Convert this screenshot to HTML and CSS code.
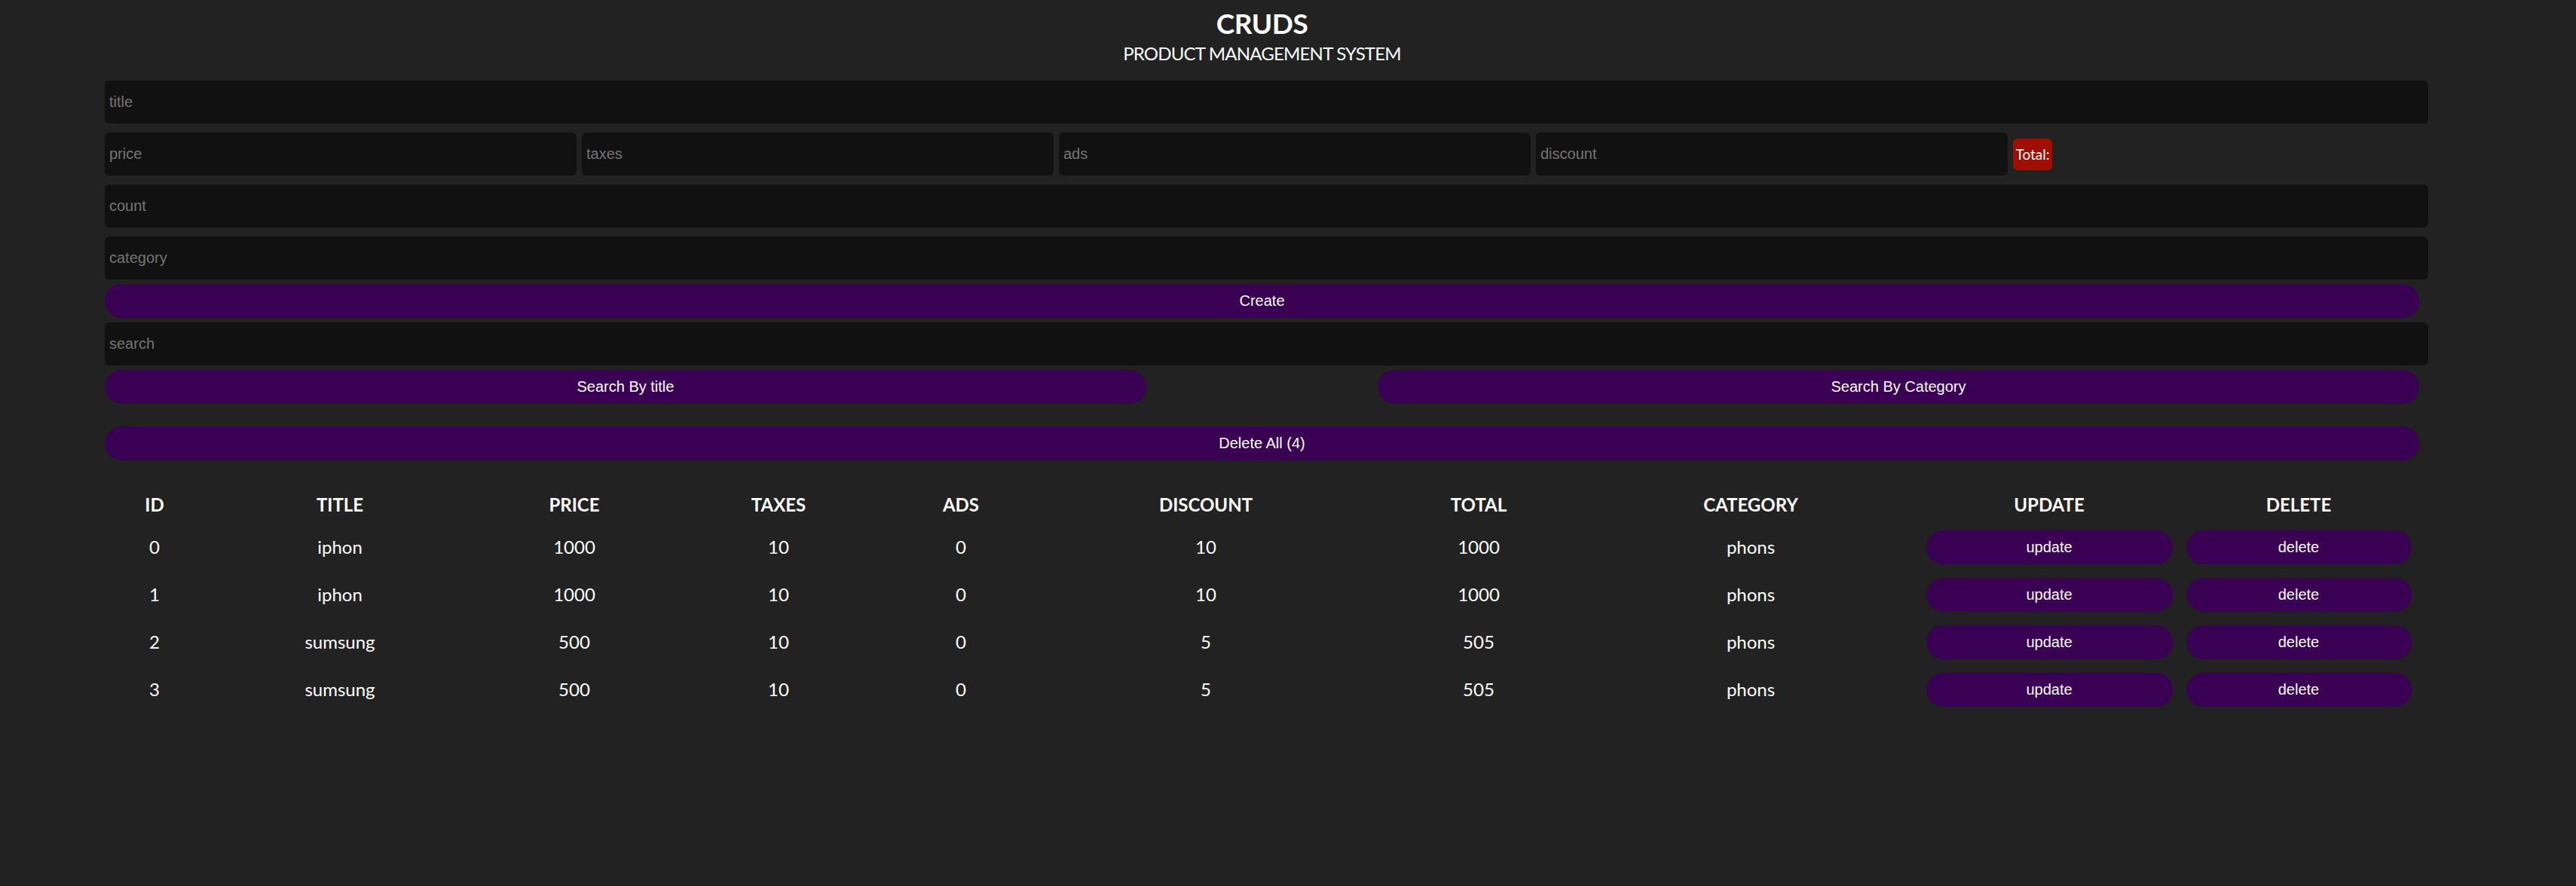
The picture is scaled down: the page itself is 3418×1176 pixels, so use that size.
FILE: index.html
```html
<!DOCTYPE html>
<html lang="en">
<head>
<meta charset="utf-8">
<title>CRUDS</title>
<link rel="stylesheet" href="styles.css">
</head>
<body>
<div class="crud">
  <div class="head">
    <h2>CRUDS</h2>
    <p>product management system</p>
  </div>
  <div class="inputs">
    <input type="text" placeholder="title" class="field">
    <div class="price">
      <input type="number" placeholder="price" class="field small">
      <input type="number" placeholder="taxes" class="field small">
      <input type="number" placeholder="ads" class="field small">
      <input type="number" placeholder="discount" class="field small">
      <small class="total">Total:</small>
    </div>
    <input type="number" placeholder="count" class="field">
    <input type="text" placeholder="category" class="field">
    <button class="btn">Create</button>
  </div>
  <div class="outputs">
    <input type="text" placeholder="search" class="field">
    <div class="btn-search">
      <button class="btn half">Search By title</button>
      <button class="btn half">Search By Category</button>
    </div>
    <div class="delete-all">
      <button class="btn">Delete All (4)</button>
    </div>
    <table class="products">
      <colgroup>
        <col class="c-id"><col class="c-title"><col class="c-price"><col class="c-taxes"><col class="c-ads">
        <col class="c-discount"><col class="c-total"><col class="c-category"><col class="c-update"><col class="c-delete">
      </colgroup>
      <thead>
        <tr>
          <th>id</th><th>title</th><th>price</th><th>taxes</th><th>ads</th>
          <th>discount</th><th>total</th><th>category</th><th>update</th><th>delete</th>
        </tr>
      </thead>
      <tbody>
        <tr>
          <td>0</td><td>iphon</td><td>1000</td><td>10</td><td>0</td><td>10</td><td>1000</td><td>phons</td>
          <td><button class="btn">update</button></td><td><button class="btn">delete</button></td>
        </tr>
        <tr>
          <td>1</td><td>iphon</td><td>1000</td><td>10</td><td>0</td><td>10</td><td>1000</td><td>phons</td>
          <td><button class="btn">update</button></td><td><button class="btn">delete</button></td>
        </tr>
        <tr>
          <td>2</td><td>sumsung</td><td>500</td><td>10</td><td>0</td><td>5</td><td>505</td><td>phons</td>
          <td><button class="btn">update</button></td><td><button class="btn">delete</button></td>
        </tr>
        <tr>
          <td>3</td><td>sumsung</td><td>500</td><td>10</td><td>0</td><td>5</td><td>505</td><td>phons</td>
          <td><button class="btn">update</button></td><td><button class="btn">delete</button></td>
        </tr>
      </tbody>
    </table>
  </div>
</div>
</body>
</html>
```

FILE: styles.css
```css
* {
  margin: 0;
  padding: 0;
  box-sizing: border-box;
}

html, body {
  background: #222222;
}

body {
  color: #ffffff;
  font-family: "Lato", "Open Sans", sans-serif;
  font-size: 24px;
  min-height: 1176px;
}

.crud {
  width: 3071px;
  margin-left: 139px;
  padding-top: 7px;
}

.head {
  text-align: center;
  text-transform: uppercase;
  margin-bottom: 14px;
}

.head h2 {
  font-size: 37px;
  font-weight: 700;
  line-height: 48px;
  letter-spacing: -0.5px;
}

.head p {
  font-size: 24px;
  line-height: 32px;
  letter-spacing: -0.8px;
}

.inputs,
.outputs {
  display: flex;
  flex-direction: column;
}

.field {
  display: block;
  width: calc(100% + 12px);
  height: 57px;
  margin: 6px 0;
  padding: 0 6px;
  border: none;
  outline: none;
  border-radius: 6px;
  background: #111111;
  color: #ffffff;
  font-family: "Liberation Sans", Arial, sans-serif;
  font-size: 20px;
}

.field::placeholder {
  color: #757575;
}

.field::-webkit-outer-spin-button,
.field::-webkit-inner-spin-button {
  -webkit-appearance: none;
  margin: 0;
}

.price {
  display: flex;
  align-items: center;
  gap: 7.5px;
}

.price .small {
  width: 625.5px;
  flex: 0 0 auto;
}

.total {
  display: flex;
  align-items: center;
  justify-content: center;
  width: 52px;
  height: 42px;
  background: #a00d02;
  border-radius: 6px;
  font-size: 19px;
  color: #ffffff;
}

.btn {
  display: block;
  width: 100%;
  height: 45px;
  border: none;
  border-radius: 30px;
  background: #390053;
  color: #ffffff;
  font-family: "Liberation Sans", Arial, sans-serif;
  font-size: 20px;
  cursor: pointer;
}

.btn-search {
  display: flex;
  justify-content: space-between;
}

.btn-search .half {
  width: 45%;
}

.delete-all {
  margin-top: 30px;
}

.products {
  width: 100%;
  table-layout: fixed;
  border-spacing: 3px;
  margin-top: 32px;
  text-align: center;
}

.products th {
  text-transform: uppercase;
  font-weight: 700;
  line-height: 32px;
  padding: 7.5px;
}

.products td {
  line-height: 32px;
  padding: 7.5px;
}

.c-id { width: 126px; }
.c-title { width: 360px; }
.c-price { width: 256px; }
.c-taxes { width: 280px; }
.c-ads { width: 198px; }
.c-discount { width: 446px; }
.c-total { width: 272px; }
.c-category { width: 444px; }
.c-update { width: 342px; }
.c-delete { width: 314px; }
```
